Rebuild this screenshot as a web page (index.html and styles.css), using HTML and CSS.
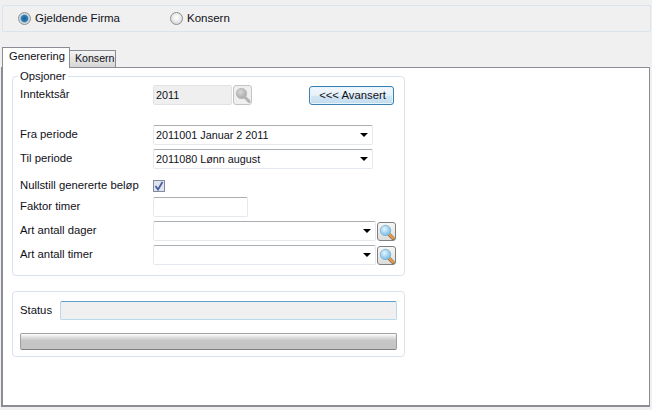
FILE: index.html
```html
<!DOCTYPE html>
<html lang="no">
<head>
<meta charset="utf-8">
<title>Generering</title>
<link rel="stylesheet" href="styles.css">
</head>
<body>
<svg class="defs" width="0" height="0" aria-hidden="true">
  <defs>
    <radialGradient id="lensBlue" cx="40%" cy="35%" r="70%"><stop offset="0" stop-color="#e4f6ff"/><stop offset="1" stop-color="#6db8e8"/></radialGradient>
    <radialGradient id="lensGrey" cx="40%" cy="35%" r="70%"><stop offset="0" stop-color="#d8d8d8"/><stop offset="1" stop-color="#a6a6a6"/></radialGradient>
    <symbol id="mag-blue" viewBox="0 0 16 16">
      <path d="M9.5 9.8 14 14.4" stroke="#7a6a58" stroke-width="3.4" stroke-linecap="round"/>
      <path d="M10.4 10.6 14 14.3" stroke="#f09a3c" stroke-width="2.2" stroke-linecap="round"/>
      <circle cx="6.5" cy="6.5" r="5.2" fill="url(#lensBlue)" stroke="#8fb4cc"/>
    </symbol>
    <symbol id="mag-grey" viewBox="0 0 16 16">
      <path d="M9.5 9.8 14 14.4" stroke="#b4b4b4" stroke-width="3" stroke-linecap="round"/>
      <circle cx="6.5" cy="6.5" r="5.2" fill="url(#lensGrey)" stroke="#bcbcbc"/>
    </symbol>
  </defs>
</svg>
<div class="topbar">
  <label class="radio-item first"><span class="radio on"></span><span class="radio-text">Gjeldende Firma</span></label>
  <label class="radio-item"><span class="radio"></span><span class="radio-text">Konsern</span></label>
</div>
<div class="tabs">
  <div class="tab active">Generering</div>
  <div class="tab">Konsern</div>
</div>
<div class="page">
  <fieldset class="group">
    <legend>Opsjoner</legend>
    <div class="row r-year">
      <span class="label">Inntektsår</span>
      <span class="field disabled w-year">2011</span>
      <span class="iconbtn grey"><svg width="16" height="16"><use href="#mag-grey"/></svg></span>
      <button class="primary">&lt;&lt;&lt; Avansert</button>
    </div>
    <div class="row r-from">
      <span class="label">Fra periode</span>
      <span class="field combo w-period">2011001 Januar 2 2011<i class="arrow"></i></span>
    </div>
    <div class="row r-to">
      <span class="label">Til periode</span>
      <span class="field combo w-period">2011080 Lønn august<i class="arrow"></i></span>
    </div>
    <div class="row r-check">
      <span class="label">Nullstill genererte beløp</span>
      <span class="check"><svg width="10" height="10" viewBox="0 0 10 10"><path d="M1.5 5 4 8.5 8.5 1" fill="none" stroke="#4a5f9e" stroke-width="1.8"/></svg></span>
    </div>
    <div class="row r-factor">
      <span class="label">Faktor timer</span>
      <span class="field w-factor"></span>
    </div>
    <div class="row r-art">
      <span class="label">Art antall dager</span>
      <span class="field combo w-art"><i class="arrow"></i></span>
      <span class="iconbtn blue"><svg width="16" height="16"><use href="#mag-blue"/></svg></span>
    </div>
    <div class="row r-art">
      <span class="label">Art antall timer</span>
      <span class="field combo w-art"><i class="arrow"></i></span>
      <span class="iconbtn blue"><svg width="16" height="16"><use href="#mag-blue"/></svg></span>
    </div>
  </fieldset>
  <div class="group status">
    <div class="status-row">
      <span class="status-label">Status</span>
      <span class="status-field"></span>
    </div>
    <div class="progress"></div>
  </div>
</div>
</body>
</html>
```
FILE: styles.css
```css
* { box-sizing: border-box; }
html, body { margin: 0; height: 410px; overflow: hidden; }
body {
  background: #f0f0f0;
  font-family: "Liberation Sans", Arial, sans-serif;
  font-size: 11.3px;
  line-height: 14px;
  color: #101018;
}
.defs { position: absolute; }

.topbar {
  display: flex;
  align-items: center;
  height: 27px;
  margin: 5px 1px 0 2px;
  padding-left: 15px;
  border: 1px solid #dbe4ec;
  border-radius: 2px;
}
.radio-item { display: flex; align-items: center; gap: 4px; }
.radio-item.first { width: 152px; }
.radio-text { margin-top: -2px; font-size: 11.5px; }
.radio {
  width: 13px;
  height: 13px;
  border-radius: 50%;
  border: 1px solid #8e8f8f;
  background: radial-gradient(circle at 50% 40%, #fff 0, #e6e6e6 55%, #c8c8c8 100%);
}
.radio.on {
  background: radial-gradient(circle, #1c5f94 0, #2f7fb8 42%, #c8d2da 55%, #eee 100%);
}

.tabs {
  display: flex;
  align-items: flex-end;
  height: 20px;
  margin: 15px 0 0 2px;
}
.tab {
  width: 47px;
  height: 17px;
  padding: 0 0 0 5px;
  margin-left: -1px;
  font-size: 10.6px;
  background: linear-gradient(#f4f4f4, #d6d6d6);
  border: 1px solid #8c8c94;
  border-bottom: 0;
}
.tab.active {
  position: relative;
  z-index: 1;
  width: 68px;
  height: 21px;
  margin: 0 0 -1px;
  padding: 1px 0 0 6px;
  font-size: 11.2px;
  background: #fff;
}

.page {
  width: 649px;
  height: 340px;
  margin-left: 1px;
  padding: 1px 0 0 9px;
  background: #fff;
  border: 1px solid #8c8c94;
  border-left-width: 2px;
  border-bottom-width: 2px;
}
.group {
  display: block;
  width: 393px;
  min-width: 0;
  margin: 0;
  padding: 2px 7px 10px;
  border: 1px solid #d8e3ec;
  border-radius: 4px;
}
legend { padding: 0 2px; margin-left: -2px; height: 14px; }

.row { display: flex; align-items: center; }
.label { width: 133px; flex: none; margin-top: -2px; }
.r-year { height: 20px; }
.r-from { height: 20px; margin-top: 20px; }
.r-to { height: 20px; margin-top: 4px; }
.r-check { height: 12px; margin-top: 11px; }
.r-factor { height: 20px; margin-top: 5px; }
.r-art { height: 20px; margin-top: 4px; }

.field {
  position: relative;
  display: block;
  height: 20px;
  padding: 2px 0 0 2px;
  font-size: 10.8px;
  background: #fff;
  border: 1px solid #e3e9ef;
  border-top-color: #abadb3;
  border-radius: 2px;
}
.field.disabled { background: #efefef; border-color: #dfe3e8; }
.w-year { width: 79px; }
.w-period { width: 220px; }
.w-factor { width: 95px; }
.w-art { width: 223px; }
.arrow {
  position: absolute;
  right: 4px;
  top: 7px;
  border-top: 4px solid #000;
  border-left: 4px solid transparent;
  border-right: 4px solid transparent;
}

.iconbtn {
  display: flex;
  align-items: center;
  justify-content: center;
  width: 19px;
  height: 20px;
  margin-left: 1px;
  border-radius: 3px;
}
.iconbtn.grey { background: #efefef; border: 1px solid #c4c4c4; }
.iconbtn.blue {
  width: 19px;
  height: 19px;
  margin-top: 1px;
  background: linear-gradient(#f6f6f6, #dcdcdc);
  border: 1px solid #7f7f7f;
}

.primary {
  width: 85px;
  height: 19px;
  margin: 1px 0 0 57px;
  padding: 0 0 2px 2px;
  font: inherit;
  color: inherit;
  background: linear-gradient(#f2f8fc 0, #e4f0f8 50%, #d2e6f4 52%, #c2dcee 100%);
  border: 1px solid #3c7fb1;
  border-radius: 3px;
  box-shadow: inset 0 0 0 1px #e6f4fc;
}

.check {
  display: flex;
  align-items: center;
  justify-content: center;
  width: 12px;
  height: 12px;
  background: #dfe4ee;
  border: 1px solid #7f8ba0;
}

.status { margin-top: 15px; height: 66px; padding: 9px 7px 0; }
.status-row { display: flex; align-items: center; height: 19px; }
.status-label { width: 40px; margin-top: -2px; }
.status-field {
  width: 337px;
  height: 19px;
  background: #f0f0f0;
  border: 1px solid #b9d9ee;
  border-top-color: #5c9fc9;
  border-radius: 2px;
}
.progress {
  width: 377px;
  height: 17px;
  margin-top: 13px;
  background: linear-gradient(#fff 0, #dcdcdc 25%, #c6c6c6 45%, #c4c4c4 100%);
  border: 1px solid #a0a0a0;
  border-bottom-color: #808080;
  border-radius: 2px;
}
```
